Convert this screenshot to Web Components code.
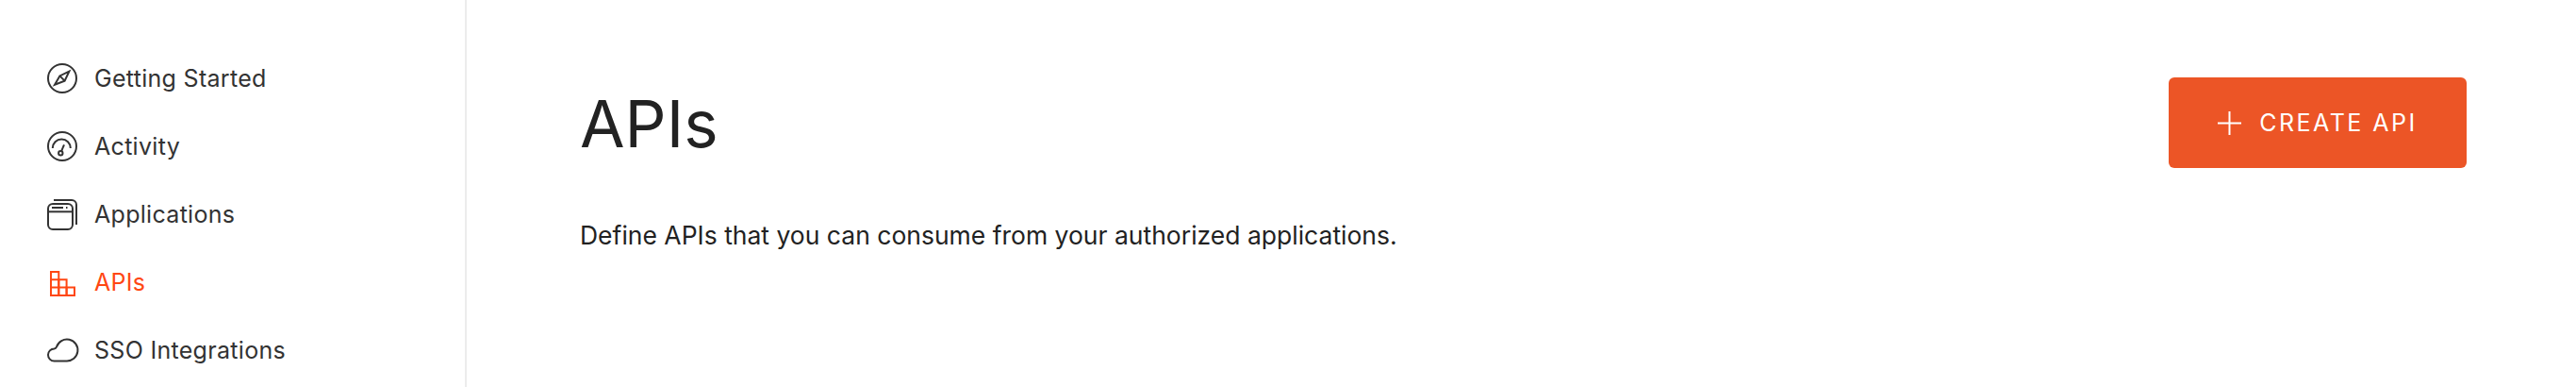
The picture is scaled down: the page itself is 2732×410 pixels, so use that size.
<!DOCTYPE html>
<html>
<head>
<meta charset="utf-8">
<title>APIs</title>
<style>
  html, body { margin: 0; height: 100%; background: #fff; overflow: hidden; }
  body { font-family: Inter, "Liberation Sans", sans-serif; }
</style>
</head>
<body>
<app-shell>
  <side-nav slot="nav">
    <nav-item label="Getting Started" icon="compass"></nav-item>
    <nav-item label="Activity" icon="gauge"></nav-item>
    <nav-item label="Applications" icon="windows"></nav-item>
    <nav-item label="APIs" icon="blocks" active></nav-item>
    <nav-item label="SSO Integrations" icon="cloud"></nav-item>
  </side-nav>
  <page-header heading="APIs" action="CREATE API">Define APIs that you can consume from your authorized applications.</page-header>
</app-shell>

<script>
const ICONS = {
    compass: `<circle cx="16" cy="16" r="15"/><path d="M23.3 8.7 18.6 18.6 8 22.7 13.4 13.4Z"/><path d="M13.4 13.4 18.6 18.6"/>`,
    gauge: `<circle cx="16" cy="16" r="15"/><path d="M5.8 18a9.5 9.5 0 0 1 19 0"/><circle cx="14.3" cy="23.3" r="2.2"/><path d="M15.1 21.2 18 14.3"/>`,
    windows: `<rect x="1" y="5" width="26" height="27" rx="5"/><path d="M1 13.3H27"/><path d="M5 9H17"/><path d="M20 9H21.5"/><path d="M7 1H26a5 5 0 0 1 5 5V27"/>`,
    blocks: `<path d="M4 5H12.3V30H4Z"/><path d="M12.3 13.3H20.6V30H12.3Z"/><path d="M20.6 21.6H29V30H20.6Z"/><path d="M4 13.3H12.3M4 21.6H20.6"/>`,
    cloud: `<path d="M7.5 27.5H20.5A11.5 11.5 0 1 0 10 12.5C9.5 14 8.5 14.3 7.5 14.5A6.5 6.5 0 0 0 7.5 27.5Z"/>`
};

class AppShell extends HTMLElement {
    constructor() {
        super();
        this.attachShadow({mode: "open"}).innerHTML = `
          <style>
            :host { display: flex; width: 2732px; height: 410px; overflow: hidden; background: #fff; }
            .side { flex: 0 0 493px; border-right: 2px solid #ececec; padding-top: 47px; }
            .main { flex: 1; min-width: 0; padding: 82px 116px 0 120px; }
          </style>
          <div class="side"><slot name="nav"></slot></div>
          <div class="main"><slot></slot></div>
        `;
    }
}

class SideNav extends HTMLElement {
    constructor() {
        super();
        this.attachShadow({mode: "open"}).innerHTML = `
          <style>
            :host { display: flex; flex-direction: column; padding-left: 50px; }
          </style>
          <slot></slot>
        `;
    }
}

class NavItem extends HTMLElement {
    constructor() {
        super();
        this.attachShadow({mode: "open"});
    }

    connectedCallback() {
        const icon = this.getAttribute("icon");
        this.shadowRoot.innerHTML = `
          <style>
            :host { display: flex; align-items: center; gap: 18px; height: 72px; color: #333; font-size: 25px; letter-spacing: 0.3px; }
            :host([active]) { color: #ff4713; }
            svg { width: 32px; height: 32px; flex: none; fill: none; stroke: currentColor; stroke-width: 2; overflow: visible; }
          </style>
          <svg viewBox="0 0 32 32">${ICONS[icon]}</svg>
          <span>${this.getAttribute("label")}</span>
        `;
    }
}

class PageHeader extends HTMLElement {
    constructor() {
        super();
        this.attachShadow({mode: "open"});
    }

    connectedCallback() {
        this.shadowRoot.innerHTML = `
          <style>
            :host { display: block; color: #222; }
            .top { display: flex; justify-content: space-between; align-items: center; height: 96px; }
            h1 { margin: 2px 0 0; font-size: 69px; font-weight: 400; line-height: 1; }
            p { margin: 51px 0 0; font-size: 26.5px; line-height: 40px; }
          </style>
          <div class="top">
            <h1>${this.getAttribute("heading")}</h1>
            <action-button>${this.getAttribute("action")}</action-button>
          </div>
          <p><slot></slot></p>
        `;
    }
}

class ActionButton extends HTMLElement {
    constructor() {
        super();
        this.attachShadow({mode: "open"}).innerHTML = `
          <style>
            :host { display: flex; align-items: center; justify-content: center; gap: 19px; width: 316px; height: 96px; box-sizing: border-box; border-radius: 6px; background: #ec5526; color: #fff; font-size: 25px; letter-spacing: 2.5px; }
            svg { width: 25px; height: 25px; stroke: #fff; stroke-width: 2; flex: none; }
          </style>
          <svg viewBox="0 0 25 25"><path d="M12.5 0V25M0 12.5H25"/></svg>
          <span><slot></slot></span>
        `;
    }
}

customElements.define("app-shell", AppShell);
customElements.define("side-nav", SideNav);
customElements.define("nav-item", NavItem);
customElements.define("page-header", PageHeader);
customElements.define("action-button", ActionButton);
</script>
</body>
</html>
